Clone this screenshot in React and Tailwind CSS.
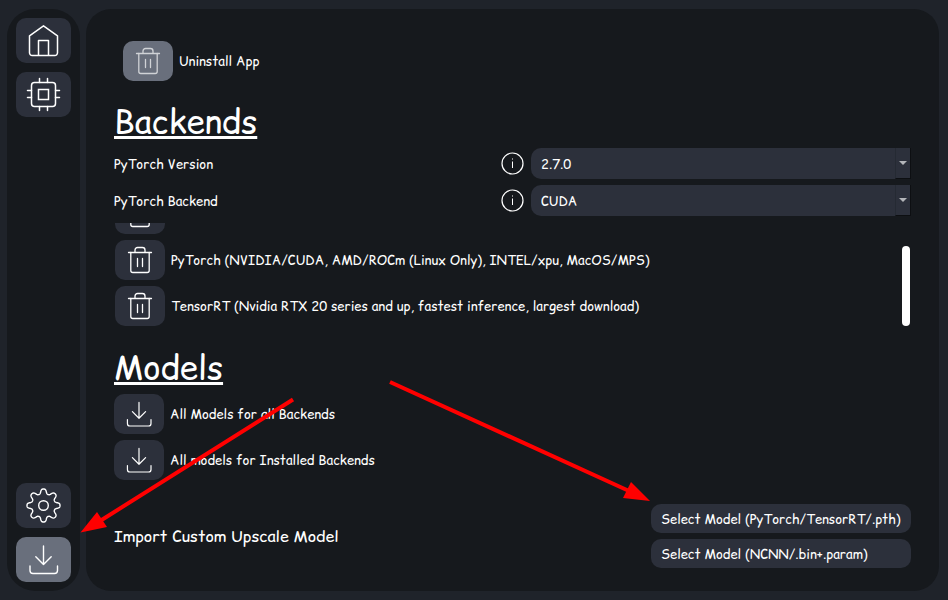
// App.jsx
import React from 'react';

const TrashIcon = () => (
    <svg width="30" height="30" viewBox="0 0 30 30" fill="none" stroke="currentColor" strokeWidth="1.3" strokeLinecap="round" strokeLinejoin="round" aria-hidden="true">
        <path d="M3.5 7.5h23M10 7.5V5a2.5 2.5 0 0 1 2.5-2.5h5A2.5 2.5 0 0 1 20 5v2.5" />
        <path d="M5.8 7.5v18a2 2 0 0 0 2 2h14.4a2 2 0 0 0 2-2v-18M12.5 13.5v8M17.5 13.5v8" />
    </svg>
);

const DownloadIcon = ({ size = 30 }) => (
    <svg width={size} height={size} viewBox="0 0 35 35" fill="none" stroke="currentColor" strokeWidth="1.4" strokeLinecap="round" strokeLinejoin="round" aria-hidden="true">
        <path d="M17.5 4v18.5M9.8 14.7l7.7 7.8 7.7-7.8" />
        <path d="M4 24v4.5a3 3 0 0 0 3 3h21.5a3 3 0 0 0 3-3V24" />
    </svg>
);

const HomeIcon = () => (
    <svg width="35" height="35" viewBox="0 0 35 35" fill="none" stroke="currentColor" strokeWidth="1.5" strokeLinejoin="round" aria-hidden="true">
        <path d="M3.5 12.8 17.5 2.8l14 10v17a2.7 2.7 0 0 1-2.7 2.7H6.2a2.7 2.7 0 0 1-2.7-2.7z" />
        <path d="M12.5 32.5v-15h10v15" />
    </svg>
);

const ChipIcon = () => (
    <svg width="35" height="35" viewBox="0 0 35 35" fill="none" stroke="currentColor" strokeWidth="1.5" strokeLinecap="round" aria-hidden="true">
        <rect x="5.5" y="5.5" width="24" height="24" rx="3" />
        <rect x="12.5" y="12.5" width="10" height="10" />
        <path d="M13.5 1.5v4M21.5 1.5v4M13.5 29.5v4M21.5 29.5v4M1.5 13.5h4M1.5 20.5h4M29.5 13.5h4M29.5 20.5h4" />
    </svg>
);

// eight rounded teeth around the hub
const gearPoints = Array.from({ length: 160 }, (_, i) => {
    const angle = (i / 160) * Math.PI * 2;
    const wave = Math.tanh(1.6 * Math.cos(angle * 8)) / Math.tanh(1.6);
    const r = 14.2 + 2.3 * wave;
    return `${(17.5 + r * Math.cos(angle)).toFixed(2)},${(17.5 + r * Math.sin(angle)).toFixed(2)}`;
}).join(' ');

const GearIcon = () => (
    <svg width="35" height="35" viewBox="0 0 35 35" fill="none" stroke="currentColor" strokeWidth="1.4" strokeLinejoin="round" aria-hidden="true">
        <polygon points={gearPoints} />
        <circle cx="17.5" cy="17.5" r="4.8" />
    </svg>
);

const InfoIcon = () => (
    <svg width="23" height="23" viewBox="0 0 23 23" fill="none" stroke="currentColor" aria-hidden="true">
        <circle cx="11.5" cy="11.5" r="10.5" strokeWidth="1.2" />
        <path d="M11.5 6.5v1M11.5 9.5V16" />
    </svg>
);

const NavButton = ({ label, active, children }) => (
    <button
        type="button"
        aria-label={label}
        className={`flex h-[45px] items-center justify-center rounded-[10px] ${active ? 'bg-[#696f7c]' : 'bg-[#2c303b]'}`}
    >
        {children}
    </button>
);

const ActionRow = ({ label, text, highlighted, children }) => (
    <div className="flex shrink-0 items-center gap-[6px]">
        <button
            type="button"
            aria-label={label || text}
            className={`flex h-10 w-[50px] items-center justify-center rounded-[10px] ${highlighted ? 'bg-[#696f7c] text-[#d0d2d6]' : 'bg-[#2c303b]'}`}
        >
            {children}
        </button>
        <span>{text}</span>
    </div>
);

const SettingRow = ({ id, label, options }) => (
    <div className="grid grid-cols-[1fr_23px_1fr] items-center gap-[7px]">
        <label htmlFor={id}>{label}</label>
        <button type="button" aria-label={`About ${label}`}><InfoIcon /></button>
        <div className="relative">
            <select id={id} className="block h-[31px] w-full appearance-none rounded-l-[10px] bg-[#2c303b] pl-[10px]">
                {options.map(option => <option key={option}>{option}</option>)}
            </select>
            <span className="pointer-events-none absolute inset-y-0 right-0 flex w-4 items-center justify-center border-r border-b border-l border-r-[#0d0f12] border-b-[#0d0f12] border-l-[#252a33]">
                <svg width="8" height="4" viewBox="0 0 8 4" aria-hidden="true"><path d="M0 0h8L4 4z" fill="#b4b6ba" /></svg>
            </span>
        </div>
    </div>
);

const Heading = ({ children }) => (
    <h2 className="pt-5 pb-[7px] text-[33px] leading-10 underline decoration-3 underline-offset-3">{children}</h2>
);

const ModelButton = ({ children }) => (
    <button type="button" className="h-[29px] w-[260px] rounded-[10px] bg-[#2c303b] px-[10px] text-left whitespace-nowrap">{children}</button>
);

const Arrows = () => (
    <svg className="pointer-events-none absolute top-0 left-0" width="948" height="600" viewBox="0 0 948 600" fill="red" stroke="red" aria-hidden="true">
        <path d="M293 399.5 100 521M390 382l238 108.5" strokeWidth="4" />
        <path d="M80.5 532.5 97 512l10 15zM650 501l-19-19-8 16z" stroke="none" />
    </svg>
);

const App = () => {
    return (
        <div className="relative flex min-h-screen gap-[6px] bg-[#1f232a] py-[9px] pr-[9px] pl-[7px] font-['Comic_Sans_MS','Comic_Relief',Lato,sans-serif] text-[13px] leading-5 text-white">
            <nav className="flex w-[73px] shrink-0 flex-col gap-[9px] rounded-[28px] bg-[#16191d] p-[9px]">
                <NavButton label="Home"><HomeIcon /></NavButton>
                <NavButton label="Processing"><ChipIcon /></NavButton>
                <div className="flex-1" />
                <NavButton label="Settings"><GearIcon /></NavButton>
                <NavButton label="Downloads" active><DownloadIcon size={35} /></NavButton>
            </nav>

            <main className="min-w-0 flex-1 rounded-[25px] bg-[#16191d] px-7 pt-8 pb-[23px]">
                <div className="pl-[9px]">
                    <ActionRow text="Uninstall App" highlighted><TrashIcon /></ActionRow>
                </div>

                <Heading>Backends</Heading>
                <div className="flex flex-col gap-[6px]">
                    <SettingRow id="pytorch-version" label="PyTorch Version" options={['2.7.0']} />
                    <SettingRow id="pytorch-backend" label="PyTorch Backend" options={['CUDA']} />
                </div>

                <div className="mt-[7px] mb-px flex h-[103px] items-end justify-between overflow-hidden">
                    <div className="flex flex-col gap-[6px] pl-px">
                        <ActionRow label="Uninstall backend"><TrashIcon /></ActionRow>
                        <ActionRow text="PyTorch (NVIDIA/CUDA, AMD/ROCm (Linux Only), INTEL/xpu, MacOS/MPS)"><TrashIcon /></ActionRow>
                        <ActionRow text="TensorRT (Nvidia RTX 20 series and up, fastest inference, largest download)"><TrashIcon /></ActionRow>
                    </div>
                    <div className="mr-px h-20 w-2 rounded-full bg-white" />
                </div>

                <Heading>Models</Heading>
                <div className="flex flex-col gap-[6px]">
                    <ActionRow text="All Models for all Backends"><DownloadIcon /></ActionRow>
                    <ActionRow text="All models for Installed Backends"><DownloadIcon /></ActionRow>
                </div>

                <div className="mt-6 flex items-center justify-between">
                    <span className="text-base">Import Custom Upscale Model</span>
                    <div className="flex flex-col gap-[6px]">
                        <ModelButton>Select Model (PyTorch/TensorRT/.pth)</ModelButton>
                        <ModelButton>Select Model (NCNN/.bin+.param)</ModelButton>
                    </div>
                </div>
            </main>

            <Arrows />
        </div>
    );
};

export default App;
